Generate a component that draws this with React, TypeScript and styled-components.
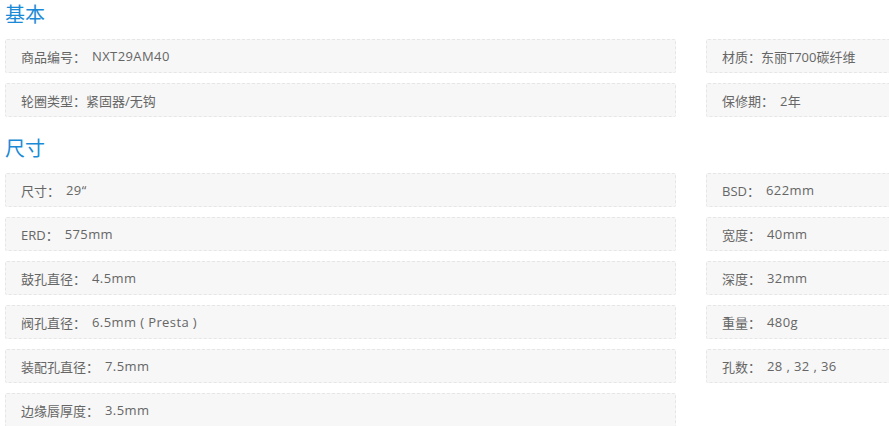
import styled, { createGlobalStyle } from "styled-components";

const GlobalStyle = createGlobalStyle`
  html, body {
    margin: 0;
    padding: 0;
    background: #fff;
    overflow: hidden;
  }
`;

/**
 * page wrapper
 */
const SpecLayout = styled.div`
  padding: 1px 0 0 5px;
  width: 1000px;
  font-family: "Open Sans", "Noto Sans CJK SC", sans-serif;
`;

const SpecSection = styled.section`
  & + & {
    margin-top: 18px;
  }
`;

const SpecTitle = styled.h3`
  margin: 0 0 12px;
  font-size: 20px;
  line-height: 26px;
  font-weight: normal;
  color: #1a8ad6;
  font-family: "Noto Sans CJK SC", sans-serif;
`;

const SpecGrid = styled.div`
  display: grid;
  grid-template-columns: 671px 220px;
  column-gap: 30px;
  row-gap: 10px;
`;

const SpecItem = styled.div<{ $empty?: boolean }>`
  box-sizing: border-box;
  height: 34px;
  padding: 0 15px;
  display: flex;
  align-items: center;
  background: #f7f7f7;
  border: 1px dashed #e6e6e6;
  border-radius: 2px;
  font-size: 13px;
  color: #666;
  white-space: pre;
  visibility: ${(p) => (p.$empty ? "hidden" : "visible")};
`;

const SpecValue = styled.span`
  margin-left: 6px;
  letter-spacing: 0.4px;
`;

type Spec = [string, string];

const basic: Spec[][] = [
  [["商品编号", "NXT29AM40"], ["材质", "东丽T700碳纤维"]],
  [["轮圈类型", "紧固器/无钩"], ["保修期", "2年"]],
];

const size: Spec[][] = [
  [["尺寸", "29“"], ["BSD", "622mm"]],
  [["ERD", "575mm"], ["宽度", "40mm"]],
  [["鼓孔直径", "4.5mm"], ["深度", "32mm"]],
  [["阀孔直径", "6.5mm ( Presta )"], ["重量", "480g"]],
  [["装配孔直径", "7.5mm"], ["孔数", "28 , 32 , 36"]],
  [["边缘唇厚度", "3.5mm"], ["", ""]],
];

const renderRows = (rows: Spec[][]) =>
  rows.map((row) =>
    row.map(([label, value], i) => (
      <SpecItem key={`${label}-${i}`} $empty={!label}>
        {label ? `${label}：` : ""}
        {/* 材质 / 轮圈类型 values sit right after the colon */}
        {label &&
          (/^[\u4e00-\u9fa5]/.test(value) ? (
            <span>{value}</span>
          ) : (
            <SpecValue>{value}</SpecValue>
          ))}
      </SpecItem>
    ))
  );

const App = () => {
  return (
    <>
      <GlobalStyle />
      <SpecLayout>
        <SpecSection>
          <SpecTitle>基本</SpecTitle>
          <SpecGrid>{renderRows(basic)}</SpecGrid>
        </SpecSection>
        <SpecSection>
          <SpecTitle>尺寸</SpecTitle>
          <SpecGrid>{renderRows(size)}</SpecGrid>
        </SpecSection>
      </SpecLayout>
    </>
  );
};

export default App;
